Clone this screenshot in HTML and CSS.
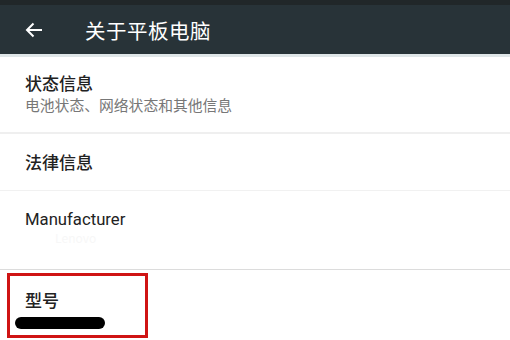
FILE: index.html
```html
<!DOCTYPE html>
<html lang="zh-CN">
  <head>
    <meta charset="UTF-8" />
    <meta name="viewport" content="width=device-width, initial-scale=1.0" />
    <title>关于平板电脑</title>
    <link rel="stylesheet" href="styles.css">
  </head>
  <body>
    <div class="statusbar"></div>
    <header class="toolbar">
      <svg class="back" width="18" height="16" viewBox="0 0 18 16">
        <path d="M17 8H2M8.5 1.5L2 8l6.5 6.5" fill="none" stroke="#ffffff" stroke-width="2" />
      </svg>
      <h1>关于平板电脑</h1>
    </header>

    <div class="lista">
      <div class="item item-status">
        <p class="titulo">状态信息</p>
        <p class="sub">电池状态、网络状态和其他信息</p>
      </div>
      <div class="item item-legal">
        <p class="titulo">法律信息</p>
      </div>
      <div class="item item-fab">
        <p class="titulo latin">Manufacturer</p>
        <p class="sub fraco">Lenovo</p>
      </div>
      <div class="item item-modelo">
        <div class="destaque">
          <p class="titulo">型号</p>
          <div class="rabisco"></div>
        </div>
      </div>
    </div>
  </body>
</html>
```

FILE: styles.css
```css
* {
  margin: 0;
  padding: 0;
  box-sizing: border-box;
}

body {
  width: 510px;
  height: 340px;
  overflow: hidden;
  background: #ffffff;
  font-family: Roboto, "Noto Sans CJK SC", sans-serif;
}

.statusbar {
  height: 5px;
  background: #212729;
}

.toolbar {
  display: flex;
  align-items: center;
  height: 49px;
  padding-left: 25px;
  background: #283338;
  border-bottom: 3px solid #dfe6e8;
  box-sizing: content-box;
}

.back {
  margin-right: 42px;
}

h1 {
  font-family: "Noto Sans CJK SC", sans-serif;
  font-weight: 400;
  font-size: 20.5px;
  color: #ffffff;
  letter-spacing: 0.5px;
}

.lista {
  display: flex;
  flex-direction: column;
}

.item {
  display: flex;
  flex-direction: column;
  padding-left: 25px;
}

.titulo {
  font-family: "Noto Sans CJK SC", sans-serif;
  font-size: 17px;
  font-weight: 500;
  line-height: 22px;
  color: #222222;
}

.latin {
  font-family: Roboto, sans-serif;
  font-size: 16.7px;
  font-weight: 400;
}

.sub {
  font-family: "Noto Sans CJK SC", sans-serif;
  font-size: 14.8px;
  line-height: 22px;
  color: #777777;
}

.fraco {
  color: #f7f7f7;
  padding-left: 30px;
  font-size: 12px;
  line-height: 14px;
}

.item-status {
  height: 77px;
  padding-top: 15px;
  border-bottom: 2px solid #efefef;
}

.item-legal {
  height: 57px;
  justify-content: center;
  border-bottom: 1px solid #f1f1f1;
}

.item-fab {
  height: 79px;
  padding-top: 18px;
  border-bottom: 1px solid #dcdcdc;
}

.item-modelo {
  padding-left: 7px;
  padding-top: 3px;
}

.destaque {
  width: 141px;
  height: 65px;
  border: 3px solid #cf1414;
  padding: 13px 0 0 15px;
}

.rabisco {
  width: 90px;
  height: 12px;
  margin: 6px 0 0 -10px;
  background: #000000;
  border-radius: 6px;
}
```
